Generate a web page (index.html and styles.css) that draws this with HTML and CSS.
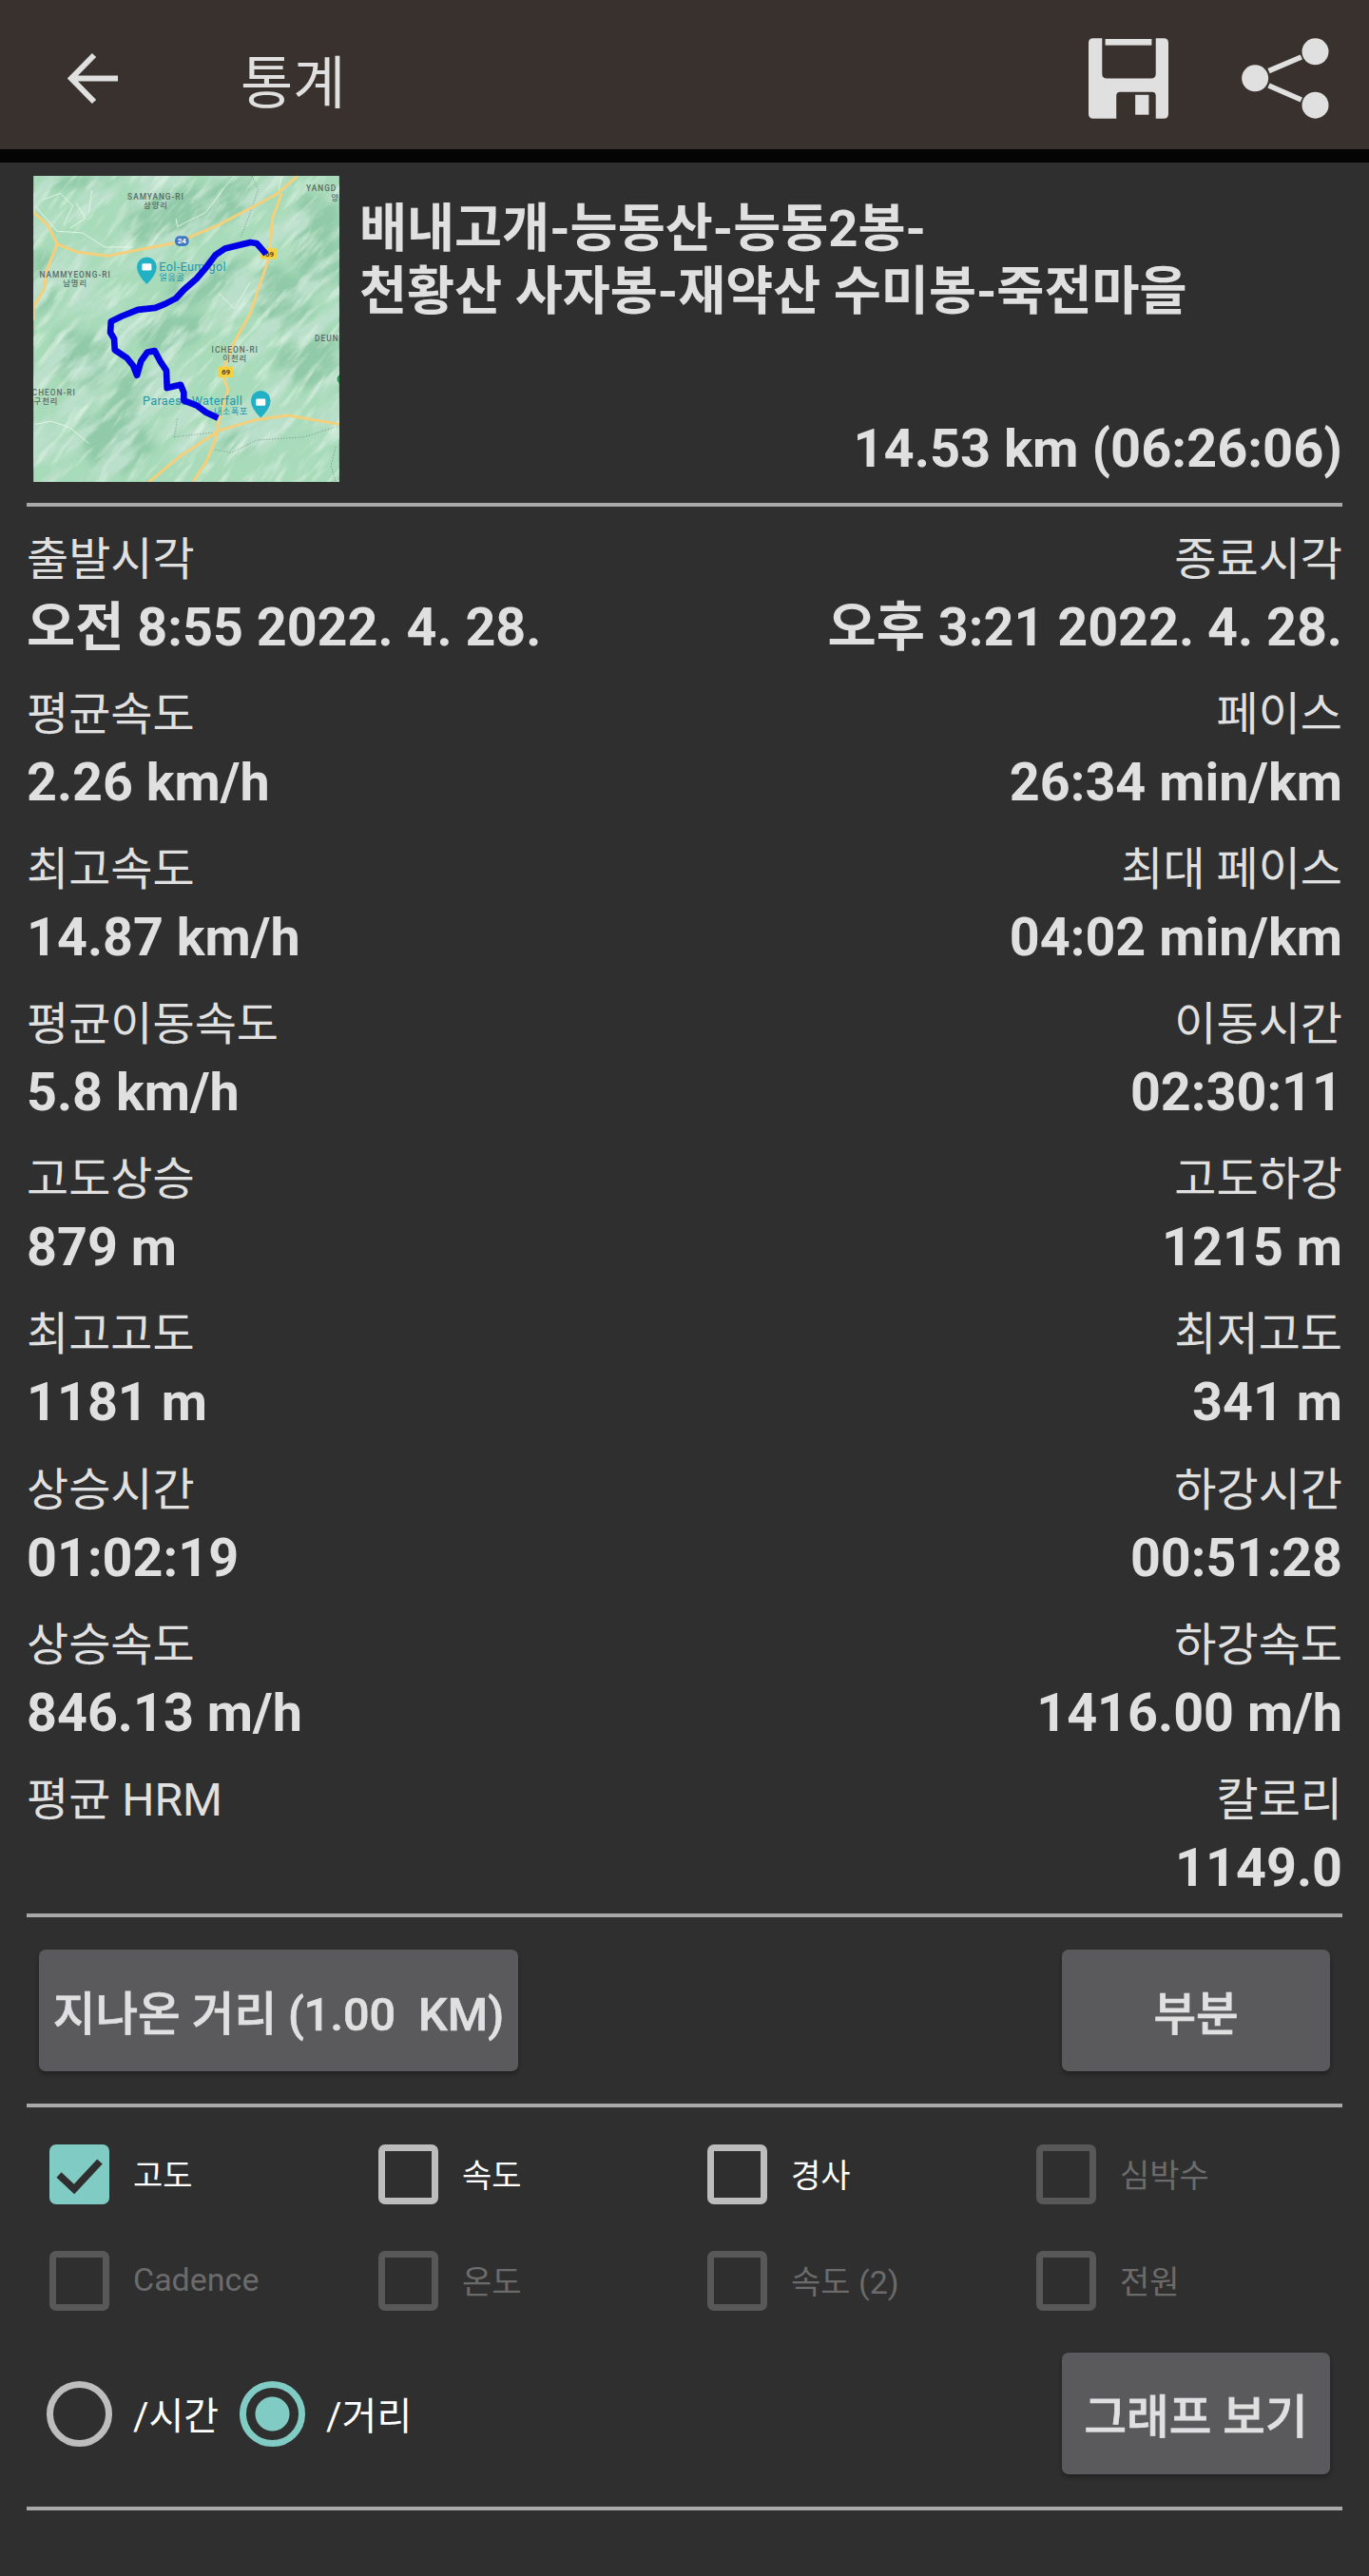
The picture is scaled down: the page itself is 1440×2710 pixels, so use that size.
FILE: index.html
```html
<!DOCTYPE html>
<html lang="ko">
<head>
  <meta charset="UTF-8" />
  <meta name="viewport" content="width=device-width, initial-scale=1.0"/>
  <title>통계</title>
  <link rel="stylesheet" href="styles.css">
</head>
<body>
  <header id="topbar">
    <svg class="back" viewBox="0 0 55 55"><path d="M53 27.5H5M28 3L4 27.5L28 52"/></svg>
    <h1>통계</h1>
    <svg class="save" viewBox="47 33 253 254">
      <path fill-rule="evenodd" d="M62 33H90V145Q90 160 105 160H245Q260 160 260 145V33H285Q300 33 300 48V272Q300 287 285 287H260V215Q260 203 248 203H147Q135 203 135 215V287H62Q47 287 47 272V48Q47 33 62 33Z"/>
      <rect x="100" y="35" width="147" height="20"/>
      <rect x="195" y="212" width="43" height="63"/>
    </svg>
    <svg class="share" viewBox="530 33 275 255">
      <circle cx="572" cy="160" r="42"/>
      <circle cx="762" cy="76" r="42"/>
      <circle cx="762" cy="245" r="42"/>
      <path d="M615 137L718 93M615 183L718 228"/>
    </svg>
  </header>

  <main>
    <section id="track">
      <svg class="map" viewBox="15 15 966 967">
        <defs>
          <filter id="relief" x="0" y="0" width="100%" height="100%">
            <feTurbulence type="fractalNoise" baseFrequency="0.005 0.014" numOctaves="5" seed="11"/>
            <feColorMatrix values="0 0 0 0 0.49  0 0 0 0 0.74  0 0 0 0 0.59  4.5 0 0 0 -2"/>
          </filter>
          <filter id="ridge" x="0" y="0" width="100%" height="100%">
            <feTurbulence type="fractalNoise" baseFrequency="0.008 0.04" numOctaves="4" seed="4"/>
            <feColorMatrix values="0 0 0 0 0.74  0 0 0 0 0.9  0 0 0 0 0.79  0 2.2 0 0 -1.15"/>
          </filter>
        </defs>
        <rect class="land" x="15" y="15" width="966" height="967"/>
        <g class="terrain">
          <path d="M40 15L300 15L220 45L90 60Z"/>
          <path d="M320 100L470 60L600 30L700 20L720 100L640 150L500 210L350 235L300 180Z"/>
          <path d="M850 60L981 110L981 330L900 400L840 300Z"/>
          <path d="M740 280L860 340L900 450L820 520L740 470L700 400Z"/>
          <path d="M90 500L250 520L270 620L190 700L130 680L60 590Z"/>
          <path d="M360 460L560 450L540 530L430 590L350 550Z"/>
          <path d="M290 640L420 640L430 720L320 800L220 790Z"/>
          <path d="M150 780L340 760L400 880L300 960L190 920Z"/>
          <path d="M610 830L740 800L720 880L620 890Z"/>
          <path d="M790 560L960 510L981 640L880 690L780 640Z"/>
          <path d="M15 250L90 270L80 420L15 460Z"/>
          <path d="M480 290L700 280L640 360L500 440L430 400Z"/>
        </g>
        <rect filter="url(#relief)" transform="rotate(-40 498 498)" x="-300" y="-300" width="1600" height="1600"/>
        <rect filter="url(#ridge)" transform="rotate(-50 498 498)" x="-300" y="-300" width="1600" height="1600"/>
        <g class="rivers">
          <path d="M20 110L90 190L170 195L240 240L330 240"/>
          <path d="M45 90L100 70L140 110L110 170"/>
          <path d="M150 100L180 150L130 180"/>
          <path d="M200 60L190 130"/>
          <path d="M465 150L470 175L560 130L620 50L650 15"/>
          <path d="M600 385L650 435L700 350"/>
          <path d="M20 800L70 790L130 810L190 860"/>
          <path d="M800 15L790 60"/>
        </g>
        <path class="border" d="M705 15L725 60L700 130L670 210M970 870L955 930L970 982M460 840L470 780M460 840L590 825M590 880L640 890L720 850L870 840L981 805"/>
        <g class="roads">
          <path d="M15 130L60 170L90 230L150 255L250 268L340 250L470 225L600 170L780 75L850 15"/>
          <path d="M90 230L55 320L50 370L15 430L15 470"/>
          <path d="M800 70L770 150L760 270L700 450L650 540L610 640L630 690L598 800L590 850L560 920L520 980"/>
          <path d="M380 982L480 900L600 820L720 785L820 772L981 800"/>
        </g>
        <circle class="pin-green" cx="990" cy="657" r="16"/>
        <g class="poi">
          <path d="M342 303a31 31 0 0 1 62 0q0 24-31 54q-31-30-31-54Z"/>
          <path d="M702 725a31 31 0 0 1 62 0q0 24-31 54q-31-30-31-54Z"/>
        </g>
        <g class="cam">
          <rect x="358" y="292" width="30" height="22" rx="4"/>
          <rect x="718" y="719" width="30" height="22" rx="4"/>
        </g>
        <g class="place">
          <text x="402" y="89">SAMYANG-RI</text>
          <text x="402" y="116">삼양리</text>
          <text x="147" y="336">NAMMYEONG-RI</text>
          <text x="147" y="364">남명리</text>
          <text x="652" y="574">ICHEON-RI</text>
          <text x="652" y="601">이천리</text>
          <text x="80" y="708">CHEON-RI</text>
          <text x="55" y="736">구천리</text>
          <text x="942" y="539">DEUN</text>
          <text x="925" y="64">YANGD</text>
          <text x="968" y="92">양</text>
        </g>
        <g class="poi-name">
          <text x="412" y="315">Eol-Eum-gol</text>
          <text class="small" x="412" y="346">얼음골</text>
          <text x="360" y="739">Paraesa Waterfall</text>
          <text class="small" x="585" y="770">내소폭포</text>
        </g>
        <g class="shield">
          <rect class="blue" x="462" y="205" width="44" height="32" rx="14"/>
          <rect x="733" y="244" width="52" height="34" rx="3"/>
          <rect x="598" y="618" width="50" height="34" rx="3"/>
          <text class="white" x="484" y="229">24</text>
          <text x="761" y="269">69</text>
          <text x="623" y="643">69</text>
        </g>
        <path class="route" d="M750 262L735 245L720 228L700 225L660 235L620 245L590 265L560 305L530 340L490 375L465 402L430 420L400 432L345 438L295 458L260 475L258 510L270 530L272 565L310 590L330 615L342 645L355 600L375 572L398 568L415 600L435 630L437 685L480 675L490 700L490 725L530 740L560 762L598 780"/>
      </svg>
      <div class="track-info">
        <h2>배내고개-능동산-능동2봉-<br>천황산 사자봉-재약산 수미봉-죽전마을</h2>
        <p>14.53 km (06:26:06)</p>
      </div>
    </section>
    <hr>

    <section id="stats">
      <div class="stat"><span>출발시각</span><strong>오전 8:55 2022. 4. 28.</strong></div>
      <div class="stat right"><span>종료시각</span><strong>오후 3:21 2022. 4. 28.</strong></div>
      <div class="stat"><span>평균속도</span><strong>2.26 km/h</strong></div>
      <div class="stat right"><span>페이스</span><strong>26:34 min/km</strong></div>
      <div class="stat"><span>최고속도</span><strong>14.87 km/h</strong></div>
      <div class="stat right"><span>최대 페이스</span><strong>04:02 min/km</strong></div>
      <div class="stat"><span>평균이동속도</span><strong>5.8 km/h</strong></div>
      <div class="stat right"><span>이동시간</span><strong>02:30:11</strong></div>
      <div class="stat"><span>고도상승</span><strong>879 m</strong></div>
      <div class="stat right"><span>고도하강</span><strong>1215 m</strong></div>
      <div class="stat"><span>최고고도</span><strong>1181 m</strong></div>
      <div class="stat right"><span>최저고도</span><strong>341 m</strong></div>
      <div class="stat"><span>상승시간</span><strong>01:02:19</strong></div>
      <div class="stat right"><span>하강시간</span><strong>00:51:28</strong></div>
      <div class="stat"><span>상승속도</span><strong>846.13 m/h</strong></div>
      <div class="stat right"><span>하강속도</span><strong>1416.00 m/h</strong></div>
      <div class="stat"><span>평균 HRM</span><strong></strong></div>
      <div class="stat right"><span>칼로리</span><strong>1149.0</strong></div>
    </section>
    <hr>

    <section id="actions">
      <button class="wide">지나온 거리 (1.00  KM)</button>
      <button>부분</button>
    </section>
    <hr>

    <section id="graphs">
      <div class="checks">
        <div class="check on"><i><svg viewBox="0 0 63 63"><path d="M10 32L26 47L53 18"/></svg></i><span>고도</span></div>
        <div class="check active"><i></i><span>속도</span></div>
        <div class="check active"><i></i><span>경사</span></div>
        <div class="check"><i></i><span>심박수</span></div>
        <div class="check"><i></i><span>Cadence</span></div>
        <div class="check"><i></i><span>온도</span></div>
        <div class="check"><i></i><span>속도 (2)</span></div>
        <div class="check"><i></i><span>전원</span></div>
      </div>
      <div class="graph-row">
        <div class="radio"><i></i>/시간</div>
        <div class="radio on"><i></i>/거리</div>
        <button>그래프 보기</button>
      </div>
    </section>
    <hr>
  </main>
</body>
</html>
```

FILE: styles.css
```css
body {
  margin: 0;
  background-color: #2f2f2f;
  color: #e0e0e0;
  font-family: Roboto, "Noto Sans CJK KR", sans-serif;
  height: 2710px;
  overflow: hidden;
}

/* top bar */
#topbar {
  display: flex;
  align-items: center;
  box-sizing: content-box;
  height: 149px;
  background-color: #39312d;
  border-bottom: 14px solid #040404;
  padding: 8px 42px 0 71px;
}
#topbar h1 {
  flex: 1;
  margin: 0 0 0 127px;
  font-size: 60px;
  font-weight: 400;
  color: #e0e0e0;
}
#topbar svg {
  display: block;
}
.back {
  width: 55px;
  height: 55px;
  fill: none;
  stroke: #e0e0e0;
  stroke-width: 6;
}
.save {
  width: 84px;
  height: 85px;
  fill: #e0e0e0;
  margin-right: 77px;
}
.share {
  width: 92px;
  height: 85px;
  fill: #e0e0e0;
  stroke: #e0e0e0;
}
.share path {
  fill: none;
  stroke-width: 17;
}
.share circle {
  stroke: none;
}

main {
  padding: 14px 28px 0;
}
hr {
  border: none;
  height: 4px;
  margin: 0;
  background-color: #a9a9a9;
}

/* header with map */
#track {
  display: flex;
  padding: 0 0 22px 7px;
}
.map {
  display: block;
  width: 322px;
  height: 322px;
  flex: none;
}
.land { fill: #a8dbb9; }
.terrain { fill: #91caa8; filter: blur(12px); }
.rivers { fill: none; stroke: #e9f6ee; stroke-width: 2.5; }
.border { fill: none; stroke: #66857a; stroke-width: 2; stroke-dasharray: 4 5; }
.roads { fill: none; stroke: #f4cf7c; stroke-width: 9; stroke-linejoin: round; }
.pin-green { fill: #2c9a52; }
.poi { fill: #21b0c4; }
.cam { fill: #fff; }
.place text {
  fill: #5c6b66;
  font-size: 25px;
  font-weight: 500;
  letter-spacing: 3px;
  text-anchor: middle;
}
.poi-name text {
  fill: #1f97ad;
  font-size: 38px;
  letter-spacing: 1px;
}
.poi-name .small { font-size: 28px; }
.shield rect { fill: #f7d13d; }
.shield .blue { fill: #3f79c4; }
.shield text {
  fill: #4a4324;
  font-size: 24px;
  font-weight: 700;
  text-anchor: middle;
}
.shield .white { fill: #fff; }
.route {
  fill: none;
  stroke: #0000e6;
  stroke-width: 20;
  stroke-linejoin: round;
}

.track-info {
  flex: 1;
  display: flex;
  flex-direction: column;
  justify-content: space-between;
  margin-left: 21px;
  min-width: 0;
}
.track-info h2 {
  margin: 23px 0 0;
  font-size: 54.4px;
  line-height: 66px;
  font-weight: 700;
  white-space: nowrap;
}
.track-info p {
  margin: 0 0 2px;
  font-size: 56px;
  line-height: 66px;
  font-weight: 700;
  text-align: right;
}

/* stats table */
#stats {
  display: grid;
  grid-template-columns: 1fr 1fr;
  grid-auto-rows: 163.1px;
  padding-top: 18px;
  height: 1480px;
  box-sizing: border-box;
}
.stat span, .stat strong {
  display: block;
  height: 73px;
  line-height: 73px;
  white-space: nowrap;
}
.stat span {
  font-size: 48px;
  line-height: 76px;
}
.stat strong {
  font-size: 55.7px;
  font-weight: 700;
}
.stat.right {
  text-align: right;
}

/* buttons */
button {
  height: 128px;
  border: none;
  border-radius: 7px;
  padding: 0;
  background-color: #5a5a5c;
  color: #e0e0e0;
  font-family: inherit;
  font-size: 48.5px;
  font-weight: 500;
  -webkit-text-stroke: 0.7px #e0e0e0;
  box-shadow: 0 3px 5px rgba(0, 0, 0, 0.3);
  width: 282px;
  white-space: pre;
}
#actions {
  display: flex;
  justify-content: space-between;
  padding: 34px 13px;
}
#actions .wide {
  width: 504px;
}

/* graph options */
#graphs {
  padding: 39px 13px 34px 11px;
}
.checks {
  display: grid;
  grid-template-columns: repeat(4, 346px);
  grid-auto-rows: 63px;
  row-gap: 49px;
  padding-left: 13px;
}
.check {
  display: flex;
  align-items: center;
  gap: 25px;
  font-size: 34px;
  color: #6b6b6b;
  white-space: nowrap;
}
.check span {
  margin-top: -3px;
}
.check i {
  display: block;
  box-sizing: border-box;
  width: 63px;
  height: 63px;
  border: 7px solid #585858;
  border-radius: 7px;
}
.check.active {
  color: #fff;
}
.check.active i {
  border-color: #bdbdbd;
}
.check.on {
  color: #fff;
}
.check.on i {
  border: none;
  background-color: #80cbc4;
}
.check.on svg {
  display: block;
  fill: none;
  stroke: #2f2f2f;
  stroke-width: 7.5;
}
.graph-row {
  display: flex;
  align-items: center;
  margin-top: 44px;
  padding-left: 10px;
}
.graph-row button {
  margin-left: auto;
}
.radio {
  display: flex;
  align-items: center;
  gap: 22px;
  margin-right: 22px;
  font-size: 40px;
  color: #fff;
}
.radio i {
  display: block;
  box-sizing: border-box;
  width: 69px;
  height: 69px;
  border: 7px solid #bdbdbd;
  border-radius: 50%;
}
.radio.on i {
  border-color: #80cbc4;
  background: radial-gradient(circle, #80cbc4 17.5px, transparent 18.5px);
}
```
